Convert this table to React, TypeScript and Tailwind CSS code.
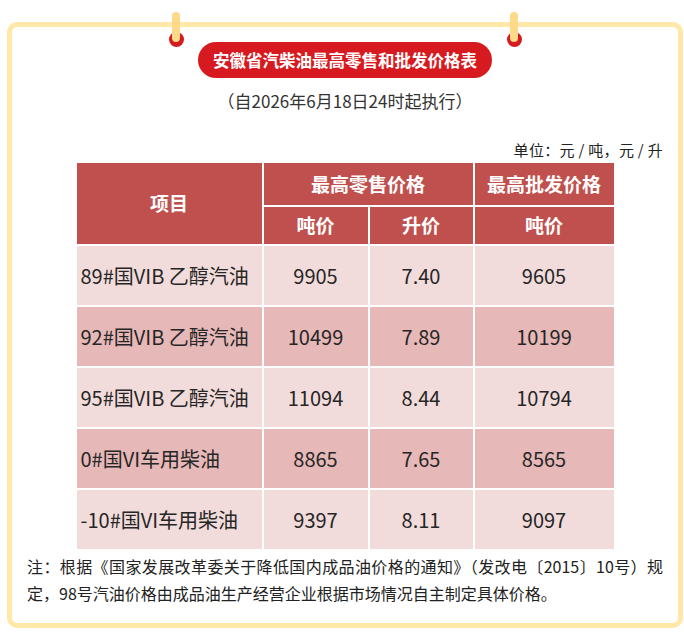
import React from "react";

const rows = [
	{ name: "89#国VIB 乙醇汽油", ton: "9905", litre: "7.40", whole: "9605", dark: false },
	{ name: "92#国VIB 乙醇汽油", ton: "10499", litre: "7.89", whole: "10199", dark: true },
	{ name: "95#国VIB 乙醇汽油", ton: "11094", litre: "8.44", whole: "10794", dark: false },
	{ name: "0#国VI车用柴油", ton: "8865", litre: "7.65", whole: "8565", dark: true },
	{ name: "-10#国VI车用柴油", ton: "9397", litre: "8.11", whole: "9097", dark: false },
];

function Pin({ pinPos, ringPos }: { pinPos: string; ringPos: string }) {
	return (
		<>
			<div className={`absolute top-[5px] w-[15px] h-[15px] rounded-full bg-[#D71A1F] ${ringPos}`}></div>
			<div className={`absolute top-[-15px] w-[8px] h-[30px] rounded-full bg-[#FCDA89] ${pinPos}`}></div>
		</>
	);
}

export default function App() {
	const head = "flex items-center justify-center bg-[#C0504D] text-white font-bold text-[19px]";
	return (
		<div
			className="w-[684px] h-[635px] bg-white pt-[22px] pl-[7px] pr-[1px]"
			style={{ fontFamily: '"Noto Sans CJK SC", "Noto Sans", sans-serif' }}
		>
			<div className="relative h-[606px] border-[5px] border-[#FFE8A8] rounded-[10px] flex flex-col">
				<Pin pinPos="left-[160px]" ringPos="left-[156.5px]" />
				<Pin pinPos="left-[498px]" ringPos="left-[494.5px]" />

				{/* title */}
				<div className="mt-[15px] mx-auto w-[294px] h-[36px] rounded-full bg-[#D71A1F] flex items-center justify-center text-white font-bold text-[16.5px]">
					安徽省汽柴油最高零售和批发价格表
				</div>
				<div className="mt-[11px] text-center text-[17px] leading-[24px] text-[#333]">
					（自2026年6月18日24时起执行）
				</div>
				<div className="mt-[27px] pr-[15px] text-right text-[15px] tracking-[0.3px] leading-[20px] text-[#222]">
					单位：元 / 吨，元 / 升
				</div>

				{/* table */}
				<div className="mt-[3px] mx-auto grid grid-cols-[185px_104px_103px_139px] grid-rows-[42px_37px_repeat(5,59px)] gap-[2px] bg-white">
					<div className={`${head} row-span-2`}>项目</div>
					<div className={`${head} col-span-2`}>最高零售价格</div>
					<div className={head}>最高批发价格</div>
					<div className={head}>吨价</div>
					<div className={head}>升价</div>
					<div className={head}>吨价</div>
					{rows.map((r) => {
						const bg = r.dark ? "bg-[#E6B8B7]" : "bg-[#F2DCDB]";
						const cell = `flex items-center justify-center text-[20px] text-[#262626] ${bg}`;
						return (
							<React.Fragment key={r.name}>
								<div className={`flex items-center pl-[4px] text-[20px] text-[#262626] whitespace-nowrap ${bg}`}>
									{r.name}
								</div>
								<div className={cell}>{r.ton}</div>
								<div className={cell}>{r.litre}</div>
								<div className={cell}>{r.whole}</div>
							</React.Fragment>
						);
					})}
				</div>

				{/* note */}
				<p className="mt-[4px] px-[15px] text-[16px] leading-[27px] text-[#222] text-justify">
					注：根据《国家发展改革委关于降低国内成品油价格的通知》（发改电〔2015〕10号）规定，98号汽油价格由成品油生产经营企业根据市场情况自主制定具体价格。
				</p>
			</div>
		</div>
	);
}
